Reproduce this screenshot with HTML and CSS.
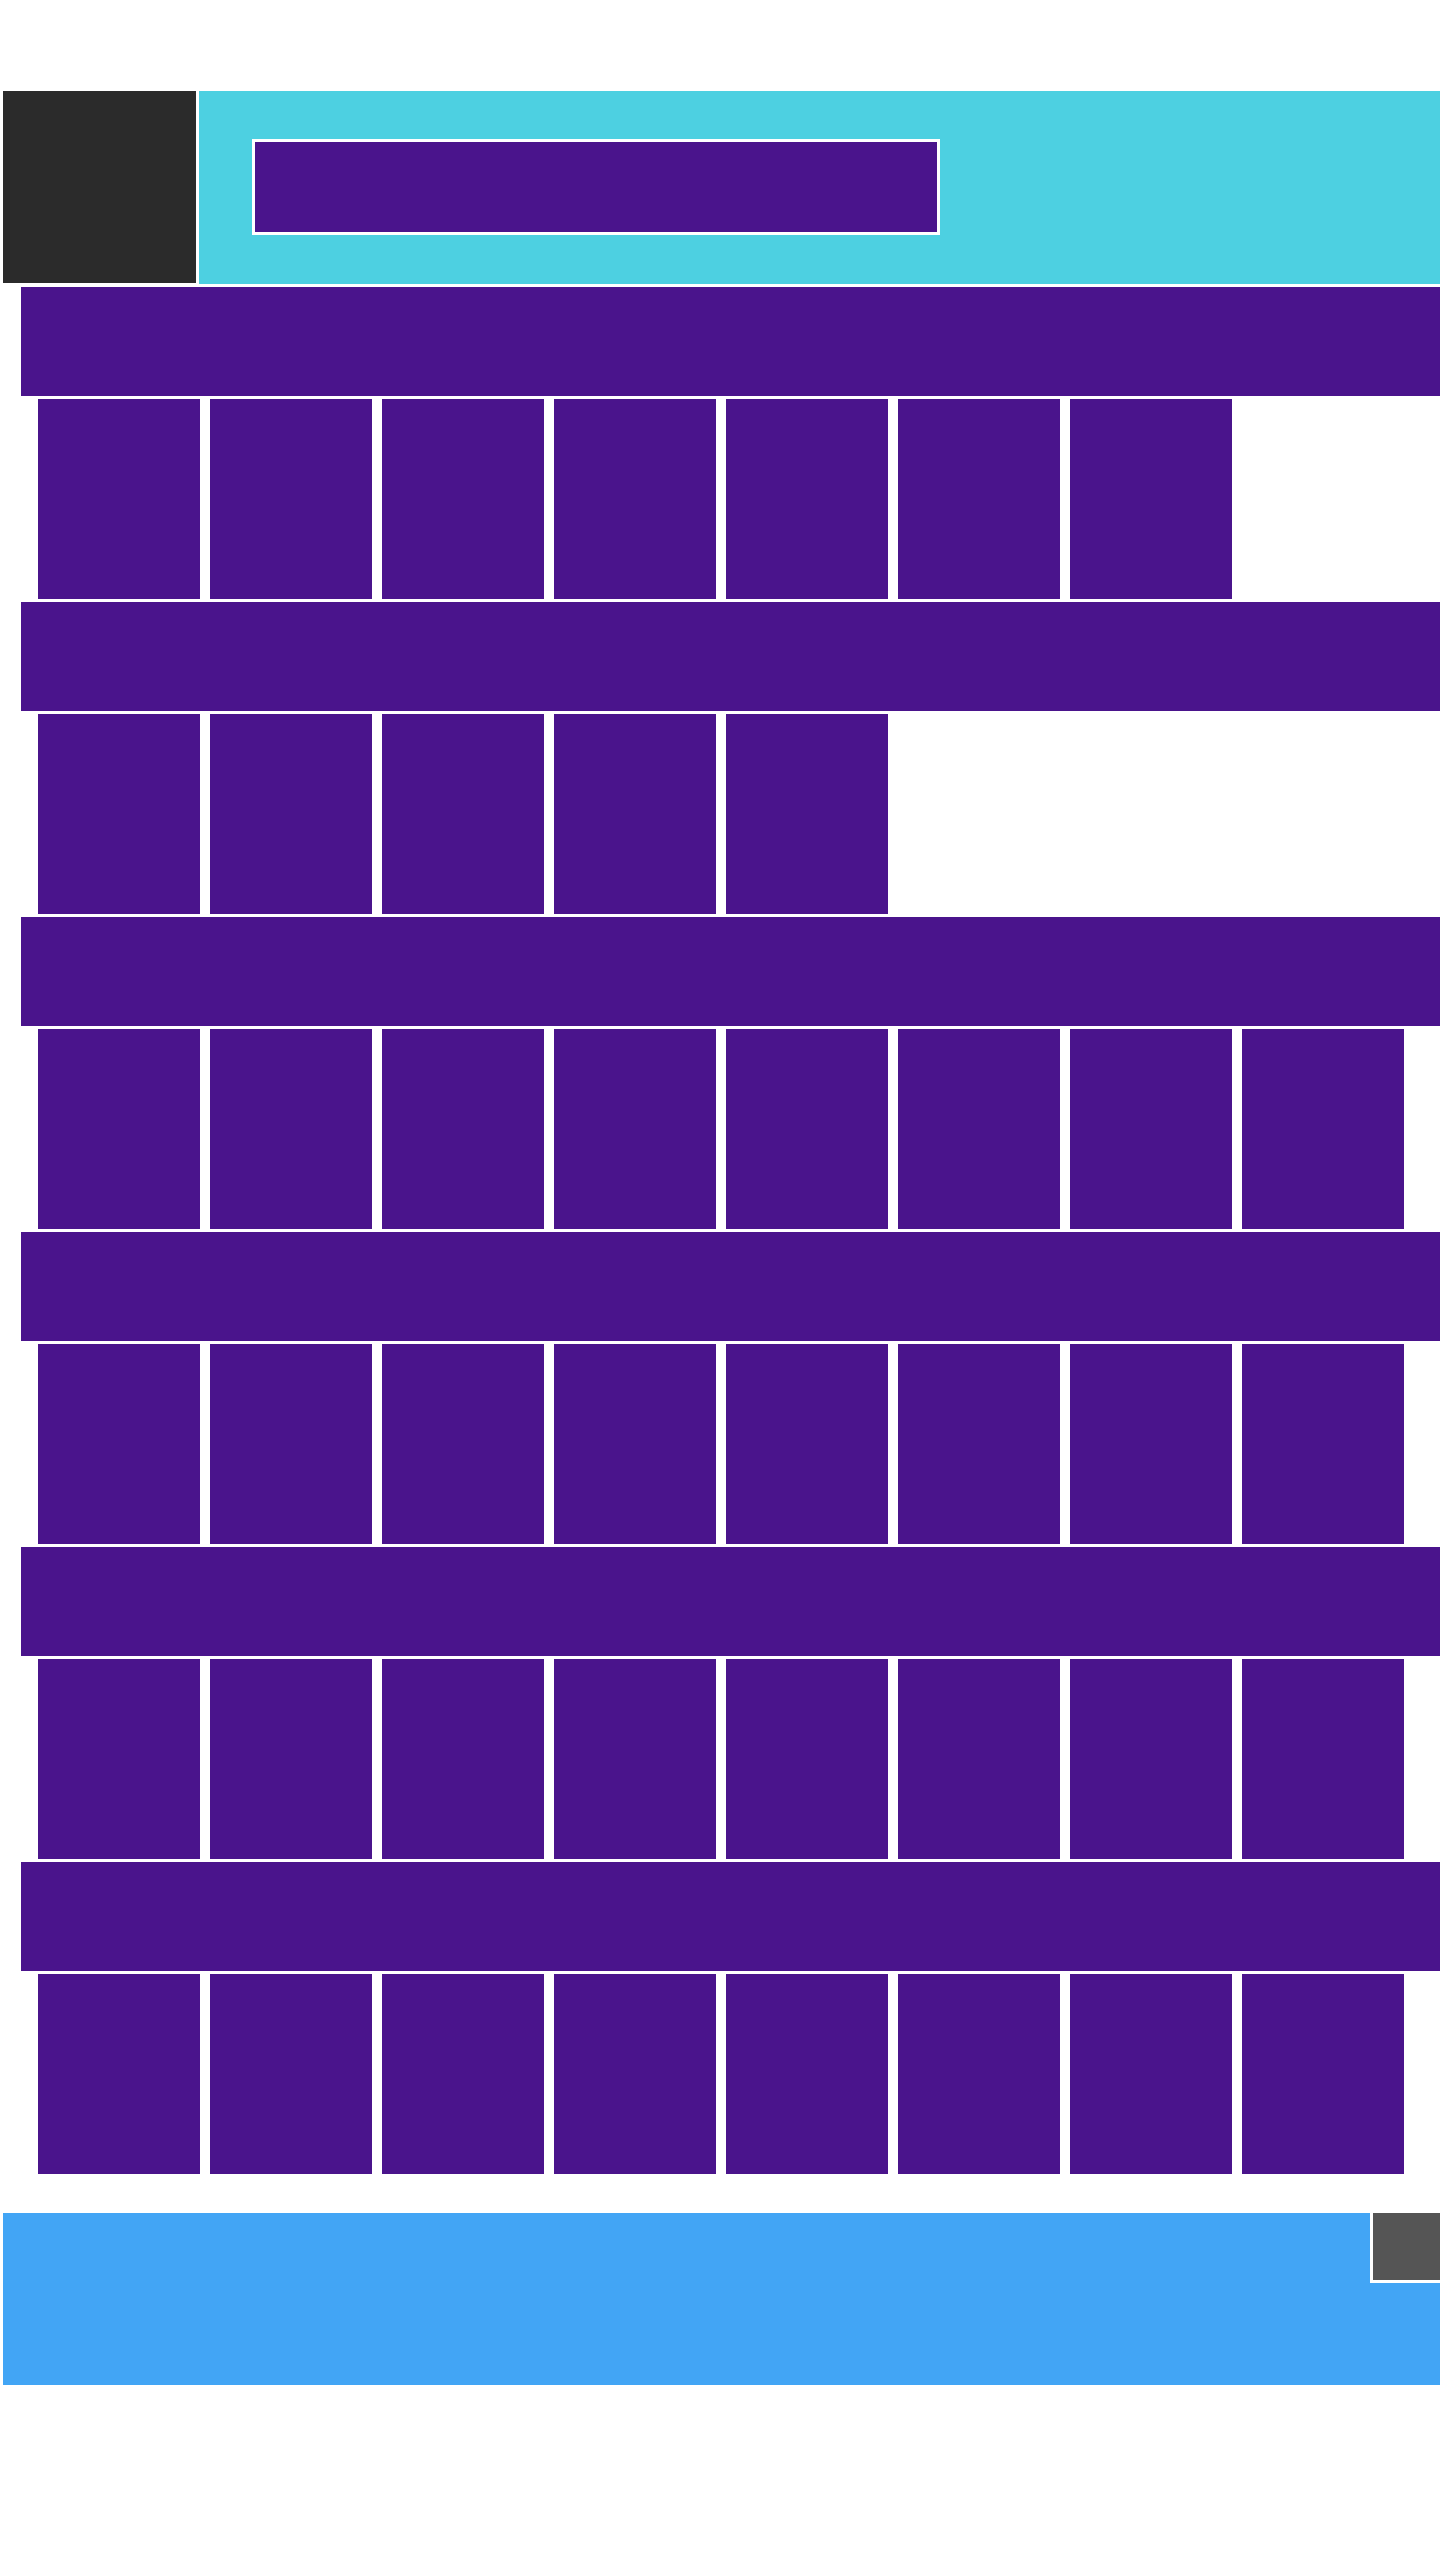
FILE: index.html
```html
<!DOCTYPE html>
<html lang="en">
<head>
    <meta charset="UTF-8">
    <meta name="viewport" content="width=device-width, initial-scale=1.0">
    <title>Catalog</title>
    <link rel="stylesheet" href="styles.css">
</head>
<body>
    <div class="page">
        <!-- Top bar -->
        <div class="top-bar">
            <div class="logo-box"></div>
            <div class="banner">
                <div class="search-box"></div>
            </div>
        </div>

        <div class="catalog">
            <div class="section">
                <div class="section-title"></div>
                <div class="card-row">
                    <div class="card"></div><div class="card"></div><div class="card"></div><div class="card"></div>
                    <div class="card"></div><div class="card"></div><div class="card"></div>
                </div>
            </div>

            <div class="section">
                <div class="section-title"></div>
                <div class="card-row">
                    <div class="card"></div><div class="card"></div><div class="card"></div><div class="card"></div>
                    <div class="card"></div>
                </div>
            </div>

            <div class="section">
                <div class="section-title"></div>
                <div class="card-row">
                    <div class="card"></div><div class="card"></div><div class="card"></div><div class="card"></div>
                    <div class="card"></div><div class="card"></div><div class="card"></div><div class="card"></div>
                </div>
            </div>

            <div class="section">
                <div class="section-title"></div>
                <div class="card-row">
                    <div class="card"></div><div class="card"></div><div class="card"></div><div class="card"></div>
                    <div class="card"></div><div class="card"></div><div class="card"></div><div class="card"></div>
                </div>
            </div>

            <div class="section">
                <div class="section-title"></div>
                <div class="card-row">
                    <div class="card"></div><div class="card"></div><div class="card"></div><div class="card"></div>
                    <div class="card"></div><div class="card"></div><div class="card"></div><div class="card"></div>
                </div>
            </div>

            <div class="section">
                <div class="section-title"></div>
                <div class="card-row">
                    <div class="card"></div><div class="card"></div><div class="card"></div><div class="card"></div>
                    <div class="card"></div><div class="card"></div><div class="card"></div><div class="card"></div>
                </div>
            </div>
        </div>

        <!-- Footer -->
        <div class="footer">
            <div class="footer-corner"></div>
        </div>
    </div>
</body>
</html>
```

FILE: styles.css
```css
body {
    font-family: "Liberation Sans", Arial, sans-serif;
    background: #fff;
    margin: 0;
    padding: 0;
}

.page {
    padding: 91px 0 0 3px;
}

.top-bar {
    display: flex;
    align-items: flex-start;
    gap: 3px;
}

.logo-box {
    width: 193px;
    height: 192px;
    background: #2b2b2b;
    flex-shrink: 0;
}

.banner {
    flex: 1;
    height: 193px;
    background: #4dd0e1;
    padding: 48px 0 0 53px;
    box-sizing: border-box;
}

.search-box {
    width: 682px;
    height: 90px;
    background: #4a148c;
    border: 3px solid #fff;
}

.catalog {
    margin: 3px 0 0 18px;
}

.section-title {
    height: 109px;
    background: #4a148c;
    margin-bottom: 3px;
}

.card-row {
    display: flex;
    gap: 10px;
    padding-left: 17px;
    margin-bottom: 3px;
}

.card {
    width: 162px;
    height: 200px;
    background: #4a148c;
    flex-shrink: 0;
}

.footer {
    position: relative;
    height: 172px;
    margin-top: 39px;
    background: #42a5f5;
}

.footer-corner {
    position: absolute;
    top: 0;
    right: 0;
    width: 67px;
    height: 67px;
    background: #555;
    border-left: 3px solid #fff;
    border-bottom: 3px solid #fff;
}
```
